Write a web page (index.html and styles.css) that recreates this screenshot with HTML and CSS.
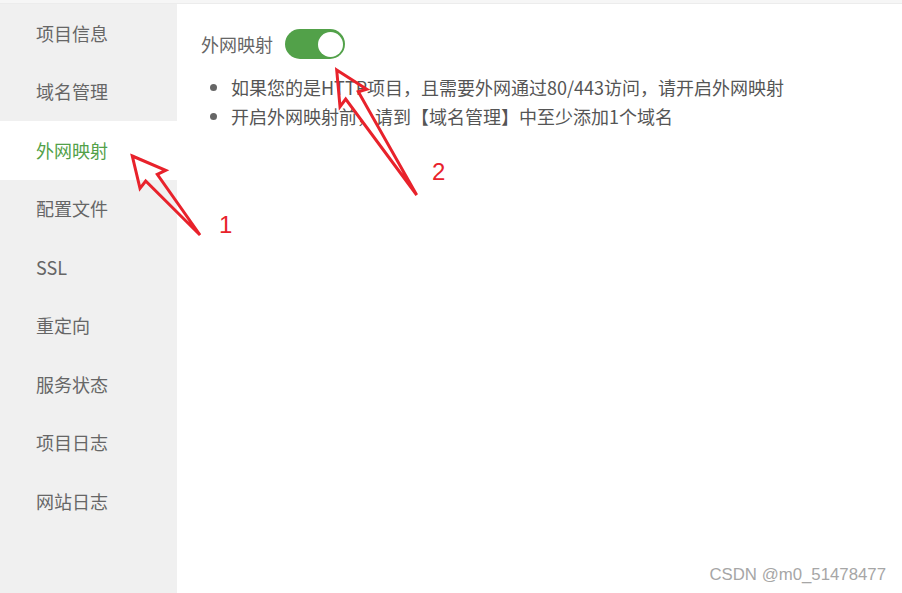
FILE: index.html
```html
<!DOCTYPE html>
<html lang="zh-CN">
<head>
  <meta charset="UTF-8" />
  <title>外网映射</title>
  <link rel="stylesheet" href="styles.css">
</head>
<body>
  <div class="topbar"></div>
  <div class="layout">
    <ul class="menu">
      <li>项目信息</li>
      <li>域名管理</li>
      <li class="active">外网映射</li>
      <li>配置文件</li>
      <li>SSL</li>
      <li>重定向</li>
      <li>服务状态</li>
      <li>项目日志</li>
      <li>网站日志</li>
    </ul>
    <div class="main">
      <div class="switch-row">
        <span class="switch-label">外网映射</span>
        <span class="switch on"><span class="knob"></span></span>
      </div>
      <ul class="tips">
        <li>如果您的是HTTP项目，且需要外网通过80/443访问，请开启外网映射</li>
        <li>开启外网映射前，请到【域名管理】中至少添加1个域名</li>
      </ul>
    </div>
  </div>

  <!-- 标注箭头 -->
  <svg class="marks" width="902" height="593" viewBox="0 0 902 593">
    <path d="M132.3,156 L165.7,170.3 L157.3,174.3 L200,235 L145.7,181 L140,188.3 Z" />
    <path d="M336.7,70 L366.7,89.3 L358.3,91.7 L416.7,195 L345.7,99 L340,106.7 Z" />
    <text x="219" y="233">1</text>
    <text x="432" y="180">2</text>
  </svg>

  <div class="watermark">CSDN @m0_51478477</div>
</body>
</html>
```

FILE: styles.css
```css
* {
  box-sizing: border-box;
  margin: 0;
  padding: 0;
}

html, body {
  height: 100%;
}

body {
  font-family: "Noto Sans CJK SC", "Noto Sans", sans-serif;
  background-color: white;
  color: #666;
  position: relative;
  overflow: hidden;
}

.topbar {
  height: 4px;
  background-color: #f6f6f6;
  border-bottom: 1px solid #ececec;
}

.layout {
  display: flex;
  height: calc(100% - 4px);
}

.menu {
  width: 177px;
  flex-shrink: 0;
  background-color: #f0f0f0;
  list-style: none;
}

.menu li {
  height: 58.5px;
  display: flex;
  align-items: center;
  padding-left: 36px;
  padding-bottom: 1px;
  font-size: 18px;
  color: #666;
}

.menu li.active {
  background-color: white;
  color: #52a149;
}

.main {
  flex: 1;
  padding: 25px 0 0 24px;
}

.switch-row {
  display: flex;
  align-items: center;
  gap: 12px;
  height: 30px;
}

.switch-label {
  font-size: 18px;
  color: #666;
}

.switch {
  width: 60px;
  height: 30px;
  border-radius: 15px;
  background-color: #cccccc;
  display: flex;
  align-items: center;
  padding: 0 2px;
}

.switch.on {
  background-color: #52a149;
  justify-content: flex-end;
}

.knob {
  width: 25px;
  height: 25px;
  border-radius: 50%;
  background-color: white;
}

.tips {
  margin-top: 14px;
  padding-left: 30px;
  font-size: 18px;
  line-height: 29px;
  color: #555;
}

.tips li::marker {
  color: #666;
}

.marks {
  position: absolute;
  left: 0;
  top: 0;
  pointer-events: none;
}

.marks path {
  fill: none;
  stroke: #e8222b;
  stroke-width: 3;
  stroke-linejoin: miter;
}

.marks text {
  fill: #e8222b;
  font-family: "Liberation Sans", sans-serif;
  font-size: 24px;
}

.watermark {
  position: absolute;
  right: 16px;
  bottom: 8px;
  font-family: "Liberation Sans", sans-serif;
  font-size: 16.8px;
  color: #a6a6a6;
}
```
